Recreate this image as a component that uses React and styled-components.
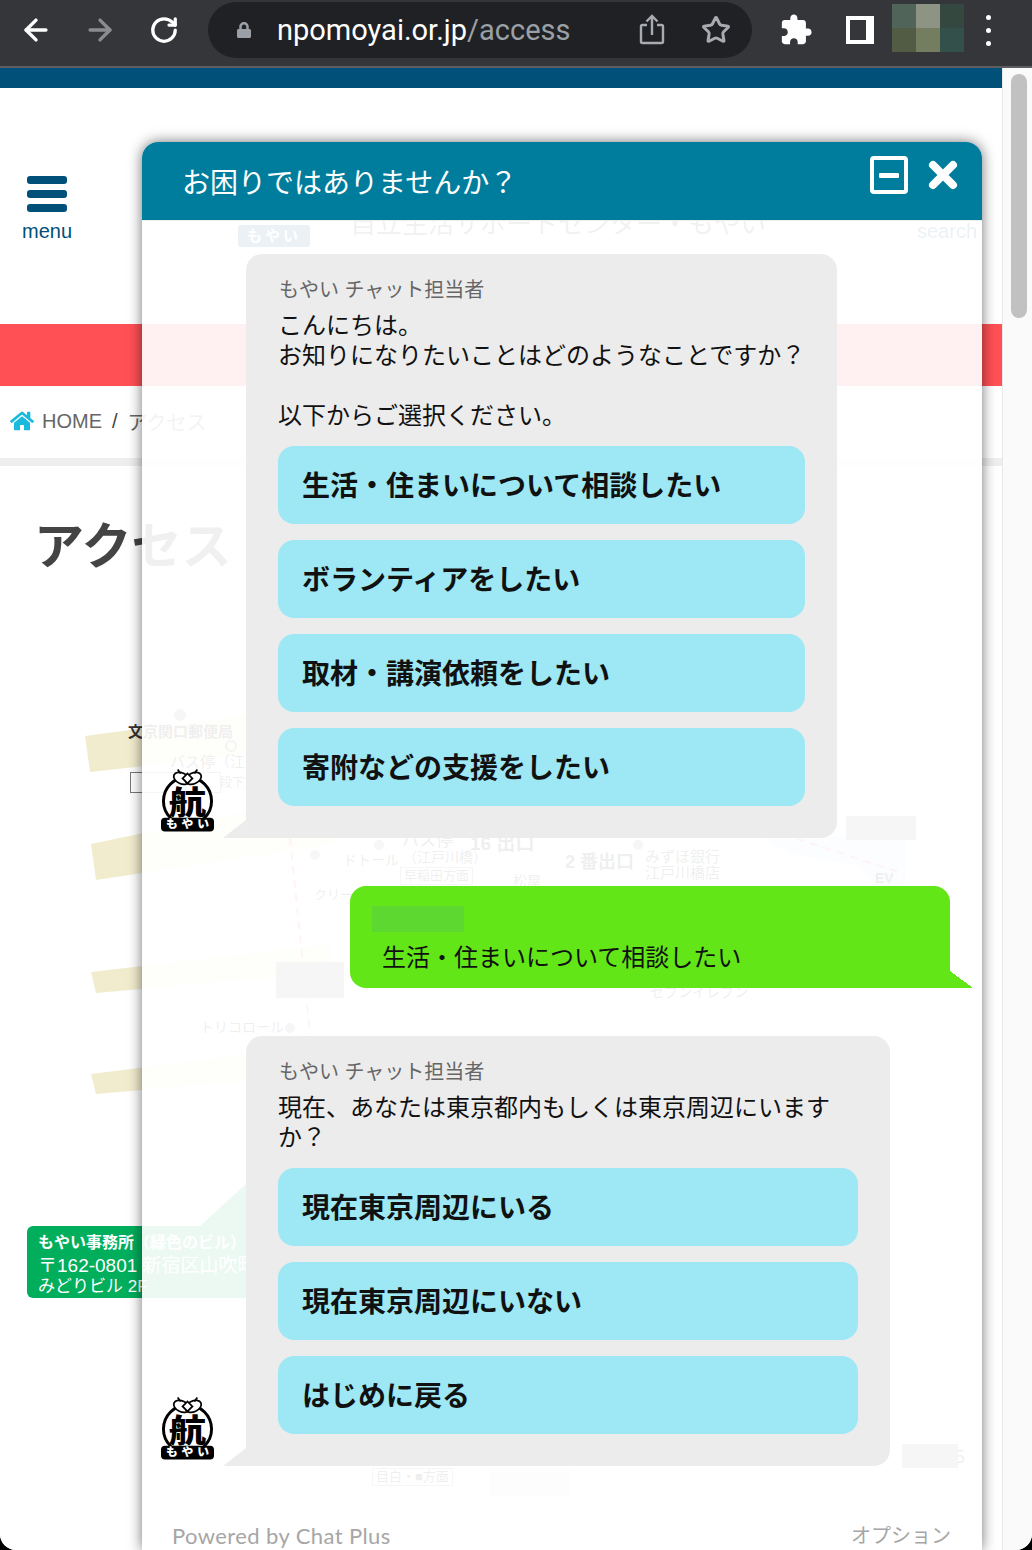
import React from 'react';
import styled, { createGlobalStyle } from 'styled-components';
import { ArrowLeft, ArrowRight, RotateCw, Star } from 'lucide-react';
import { FaHome, FaLock } from 'react-icons/fa';

const GlobalStyle = createGlobalStyle`
  html, body {
    margin: 0;
    padding: 0;
    background: #000;
  }
  body {
    width: 1032px;
    height: 1550px;
    overflow: hidden;
    font-family: 'Liberation Sans', 'Noto Sans CJK JP', sans-serif;
  }
  * { box-sizing: border-box; }
`;

const BrowserWindow = styled.div`
  width: 1032px;
  height: 1550px;
  display: flex;
  flex-direction: column;
  overflow: hidden;
  border-radius: 0 0 16px 16px;
  background: #fff;
`;

/* browser chrome */
const Toolbar = styled.div`
  height: 68px;
  flex: none;
  display: flex;
  align-items: flex-start;
  padding-left: 4px;
  background: #35363a;
  border-bottom: 2px solid #5d5e61;
`;

const ToolButton = styled.div`
  width: 64px;
  height: 60px;
  flex: none;
  display: flex;
  align-items: center;
  justify-content: center;
  color: ${({ $dim }) => ($dim ? '#8b8c8e' : '#fff')};
`;

const Omnibox = styled.div`
  width: 544px;
  height: 56px;
  margin: 2px 12px 0 12px;
  flex: none;
  display: flex;
  align-items: center;
  padding: 0 4px 0 28px;
  border-radius: 28px;
  background: #202124;
  color: #9aa0a6;
`;

const Url = styled.div`
  margin-left: 25px;
  flex: 1;
  font-family: Roboto, 'Liberation Sans', sans-serif;
  font-size: 29px;
  color: #9aa0a6;
  b {
    font-weight: 400;
    color: #fff;
  }
`;

const OmniIcon = styled.div`
  width: 64px;
  display: flex;
  justify-content: center;
  color: #a8abaf;
`;

const SidePanelIcon = styled.div`
  width: 28px;
  height: 28px;
  background: #35363a;
  border: solid #fff;
  border-width: 4px 8px 4px 4px;
`;

const ProfileBlur = styled.div`
  width: 72px;
  height: 48px;
  margin-top: 4px;
  flex: none;
  display: grid;
  grid-template-columns: repeat(3, 1fr);
  grid-template-rows: repeat(2, 1fr);
`;

const BlurCell = styled.div`
  background: ${({ $color }) => $color};
`;

const Dots = styled.div`
  width: 48px;
  height: 60px;
  display: flex;
  flex-direction: column;
  align-items: center;
  justify-content: center;
  gap: 8px;
  span {
    width: 5px;
    height: 5px;
    border-radius: 50%;
    background: #fff;
  }
`;

/* viewport */
const Viewport = styled.div`
  flex: 1;
  display: flex;
  min-height: 0;
`;

const Page = styled.div`
  position: relative;
  width: 1002px;
  flex: none;
  display: flex;
  flex-direction: column;
  background: #fff;
`;

const ScrollTrack = styled.div`
  flex: 1;
  padding: 6px 5px 0 8px;
  background: #fafafa;
  border-left: 1px solid #e8e8e8;
`;

const ScrollThumb = styled.div`
  height: 244px;
  border-radius: 9px;
  background: #c1c1c1;
`;

const TopBar = styled.div`
  height: 20px;
  flex: none;
  background: #00507a;
`;

const SiteHeader = styled.div`
  height: 236px;
  flex: none;
  display: flex;
  align-items: flex-start;
`;

const MenuButton = styled.div`
  width: 94px;
  padding-top: 88px;
  display: flex;
  flex-direction: column;
  align-items: center;
  color: #00507a;
  font-size: 20px;
  line-height: 24px;
`;

const BurgerBar = styled.div`
  width: 40px;
  height: 8px;
  margin-bottom: 6px;
  border-radius: 3px;
  background: #00507a;
  &:last-of-type {
    margin-bottom: 7px;
  }
`;

const SiteLogo = styled.div`
  width: 72px;
  height: 22px;
  margin: 137px 0 0 144px;
  border-radius: 3px;
  background: #00507a;
  color: #fff;
  font-size: 15px;
  font-weight: 700;
  line-height: 22px;
  text-align: center;
  letter-spacing: 3px;
`;

const SiteName = styled.div`
  margin: 118px 0 0 40px;
  width: 450px;
  font-size: 26px;
  line-height: 36px;
  color: #555;
  white-space: nowrap;
`;

const SearchLink = styled.div`
  margin: 131px 0 0 auto;
  padding-right: 25px;
  font-size: 20px;
  line-height: 24px;
  color: #00507a;
`;

const RedBand = styled.div`
  height: 62px;
  flex: none;
  background: #ff5055;
`;

const Breadcrumb = styled.div`
  height: 72px;
  flex: none;
  display: flex;
  align-items: center;
  padding: 0 0 2px 10px;
  font-size: 20px;
  color: #666;
  svg {
    color: #1ab9de;
    margin-right: 8px;
  }
  i {
    margin: 0 10px;
    font-style: normal;
    color: #444;
  }
`;

const Divider = styled.div`
  height: 8px;
  flex: none;
  background: #eee;
`;

const PageTitle = styled.h1`
  margin: 46px 0 22px 34px;
  font-size: 50px;
  line-height: 70px;
  font-weight: 700;
  color: #444;
`;

const AccessMap = styled.div`
  position: relative;
  flex: 1;
`;

const MapDrawing = styled.svg`
  position: absolute;
  left: 0;
  top: 0;
`;

const MapLabel = styled.div`
  position: absolute;
  left: ${({ $x }) => $x}px;
  top: ${({ $y }) => $y}px;
  font-size: ${({ $size }) => $size || 15}px;
  font-weight: ${({ $bold }) => ($bold ? 700 : 400)};
  line-height: 1.1;
  color: #333;
  white-space: nowrap;
  ${({ $boxed }) => $boxed && 'border: 1px solid #888; padding: 1px 3px;'}
`;

const OfficeSign = styled.div`
  position: absolute;
  left: 27px;
  top: 622px;
  width: 250px;
  height: 72px;
  padding: 6px 0 0 11px;
  border-radius: 6px;
  background: #00ae5c;
  color: #fff;
  white-space: nowrap;
  overflow: hidden;
`;

const SignLine = styled.div`
  font-size: ${({ $size }) => $size}px;
  font-weight: ${({ $bold }) => ($bold ? 700 : 400)};
  line-height: ${({ $height }) => $height}px;
`;

const BlurPatch = styled.div`
  position: absolute;
  left: ${({ $x }) => $x}px;
  top: ${({ $y }) => $y}px;
  width: ${({ $w }) => $w}px;
  height: ${({ $h }) => $h}px;
  background: #888;
`;

/* chat widget */
const ChatWidget = styled.div`
  position: absolute;
  left: 142px;
  top: 74px;
  bottom: 0;
  width: 840px;
  display: flex;
  flex-direction: column;
  border-radius: 16px 16px 0 0;
  background: rgba(255, 255, 255, 0.92);
  box-shadow: 0 0 14px rgba(0, 0, 0, 0.55);
`;

const ChatHeader = styled.div`
  height: 78px;
  flex: none;
  display: flex;
  align-items: center;
  padding: 0 23px 0 40px;
  border-radius: 16px 16px 0 0;
  background: #007d9c;
  color: #fff;
  font-size: 28px;
`;

const ChatTitle = styled.div`
  flex: 1;
`;

const MinimizeIcon = styled.div`
  width: 38px;
  height: 38px;
  margin: -12px 19px 0 0;
  display: flex;
  align-items: center;
  justify-content: center;
  border: 4px solid #fff;
  border-radius: 4px;
  &::after {
    content: '';
    width: 20px;
    height: 5px;
    border-radius: 1px;
    background: #fff;
  }
`;

const CloseIcon = styled.svg`
  width: 32px;
  height: 32px;
  margin-top: -12px;
`;

const ChatLog = styled.div`
  display: flex;
  flex-direction: column;
  gap: 48px;
  padding-top: 33px;
  border-top: 1px solid #eee;
`;

const ReceivedRow = styled.div`
  display: flex;
  align-items: flex-end;
  padding-left: 19px;
`;

const Bubble = styled.div`
  position: relative;
  width: ${({ $width }) => $width}px;
  margin-left: 32px;
  padding: 21px 32px 32px;
  border-radius: 16px 16px 16px 0;
  background: #ececec;
  color: #111;
  font-size: 24px;
  line-height: 30px;
  &::before {
    content: '';
    position: absolute;
    left: -23px;
    bottom: 0;
    border-style: solid;
    border-width: 0 0 18px 23px;
    border-color: transparent transparent #ececec transparent;
  }
`;

const Sender = styled.div`
  margin: 0 0 6px 1px;
  font-size: 20px;
  line-height: 30px;
  color: #666;
`;

const MessageText = styled.div`
  margin: 0 -8px 15px 0;
`;

const Choices = styled.div`
  display: flex;
  flex-direction: column;
  gap: 16px;
`;

const Choice = styled.div`
  height: 78px;
  display: flex;
  align-items: center;
  padding: 3px 0 0 24px;
  border-radius: 16px;
  background: #9de8f4;
  color: #111;
  font-size: 28px;
  font-weight: 700;
`;

const SentRow = styled.div`
  display: flex;
  justify-content: flex-end;
  padding-right: 32px;
`;

const SentBubble = styled.div`
  position: relative;
  width: 600px;
  padding: 20px 32px 15px 32px;
  border-radius: 16px 16px 0 16px;
  background: #62e617;
  color: #111;
  font-size: 24px;
  line-height: 30px;
  &::after {
    content: '';
    position: absolute;
    right: -23px;
    bottom: 0;
    width: 23px;
    height: 17px;
    background: linear-gradient(to top right, #62e617 50%, transparent 50%);
  }
`;

const NameBlur = styled.div`
  width: 92px;
  height: 26px;
  margin: 0 0 11px -10px;
  background: #5cd830;
`;

const ChatFooter = styled.div`
  margin-top: auto;
  height: 28px;
  flex: none;
  display: flex;
  justify-content: space-between;
  align-items: flex-start;
  padding: 0 31px 0 30px;
  color: #a6a6a6;
`;

const PoweredBy = styled.div`
  font-family: Lato, 'Liberation Sans', sans-serif;
  font-size: 22px;
  line-height: 28px;
  letter-spacing: 0.4px;
`;

const FooterOption = styled.div`
  font-size: 20px;
  line-height: 28px;
`;

const Avatar = () => (
  <svg width="53" height="64" viewBox="0 0 54 64" style={{ flex: 'none', marginBottom: 6 }}>
    <circle cx="27" cy="33" r="24.5" fill="#fff" stroke="#000" strokeWidth="3" />
    <g fill="#fff" stroke="#000" strokeWidth="1.8">
      <ellipse cx="21" cy="10" rx="8.5" ry="5.5" transform="rotate(25 21 10)" />
      <ellipse cx="33" cy="10" rx="8.5" ry="5.5" transform="rotate(-25 33 10)" />
      <path d="M27 5 32 10 27 15 22 10Z" />
      <path d="M17 1 20 5M37 1 34 5" fill="none" />
    </g>
    <text
      x="27"
      y="46"
      textAnchor="middle"
      textLength="38"
      lengthAdjust="spacingAndGlyphs"
      fontFamily="'Noto Sans CJK JP', sans-serif"
      fontWeight="900"
      fontSize="32"
      fill="#000"
    >
      航
    </text>
    <rect x="0" y="50" width="54" height="14" rx="4" fill="#000" />
    <text
      x="27"
      y="61"
      textAnchor="middle"
      textLength="44"
      fontFamily="'Noto Sans CJK JP', sans-serif"
      fontWeight="900"
      fontSize="12"
      fill="#fff"
    >
      もやい
    </text>
  </svg>
);

const firstChoices = [
  '生活・住まいについて相談したい',
  'ボランティアをしたい',
  '取材・講演依頼をしたい',
  '寄附などの支援をしたい',
];

const secondChoices = ['現在東京周辺にいる', '現在東京周辺にいない', 'はじめに戻る'];

const profileColors = ['#51645a', '#8d9484', '#34483f', '#525b43', '#747d5f', '#33504a'];

// map labels use page coordinates minus the map's top (604)
const mapLabels = [
  { x: 128, y: 120, text: '文京関口郵便局', bold: true },
  { x: 170, y: 150, text: 'バス停（江戸' },
  { x: 220, y: 173, text: '段下方面', size: 12 },
  { x: 402, y: 228, text: 'バス停', size: 17 },
  { x: 343, y: 249, text: 'ドトール', size: 14 },
  { x: 403, y: 246, text: '（江戸川橋）', size: 14 },
  { x: 400, y: 263, text: '早稲田方面', size: 13, boxed: true },
  { x: 470, y: 230, text: '16 出口', size: 19, bold: true },
  { x: 565, y: 249, text: '2 番出口', size: 18, bold: true },
  { x: 645, y: 245, text: 'みずほ銀行', size: 15 },
  { x: 645, y: 261, text: '江戸川橋店', size: 15 },
  { x: 513, y: 270, text: '松屋', size: 14 },
  { x: 875, y: 267, text: 'EV', size: 14, bold: true },
  { x: 314, y: 284, text: 'クリーニング', size: 13 },
  { x: 650, y: 381, text: 'セブンイレブン', size: 14 },
  { x: 200, y: 416, text: 'トリコロール', size: 14 },
  { x: 372, y: 864, text: '目白・■方面', size: 13, boxed: true },
  { x: 955, y: 844, text: '5', size: 18 },
];

const blurPatches = [
  { x: 846, y: 212, w: 70, h: 24 },
  { x: 276, y: 358, w: 68, h: 36 },
  { x: 902, y: 840, w: 56, h: 24 },
];

export default function App() {
  return (
    <>
      <GlobalStyle />
      <BrowserWindow>
        <Toolbar>
          <ToolButton><ArrowLeft size={34} strokeWidth={2.4} /></ToolButton>
          <ToolButton $dim><ArrowRight size={34} strokeWidth={2.4} /></ToolButton>
          <ToolButton><RotateCw size={30} strokeWidth={2.6} /></ToolButton>
          <Omnibox>
            <FaLock size={16} />
            <Url><b>npomoyai.or.jp</b>/access</Url>
            <OmniIcon>
              <svg width="26" height="32" viewBox="0 0 26 32" fill="none" stroke="currentColor" strokeWidth="2.4">
                <path d="M8 11H3.5a1.5 1.5 0 0 0-1.5 1.5v15a1.5 1.5 0 0 0 1.5 1.5h19a1.5 1.5 0 0 0 1.5-1.5v-15a1.5 1.5 0 0 0-1.5-1.5H18" />
                <path d="M13 21V2M7.5 7.5 13 2l5.5 5.5" />
              </svg>
            </OmniIcon>
            <OmniIcon><Star size={30} strokeWidth={2.4} /></OmniIcon>
          </Omnibox>
          <ToolButton>
            <svg width="34" height="34" viewBox="0 0 24 24" fill="currentColor">
              <path d="M20.5 11H19V7c0-1.1-.9-2-2-2h-4V3.5C13 2.12 11.88 1 10.5 1S8 2.12 8 3.5V5H4c-1.1 0-1.99.9-1.99 2v3.8H3.5c1.49 0 2.7 1.21 2.7 2.7s-1.21 2.7-2.7 2.7H2V20c0 1.1.9 2 2 2h3.8v-1.5c0-1.49 1.21-2.7 2.7-2.7 1.49 0 2.7 1.21 2.7 2.7V22H17c1.1 0 2-.9 2-2v-4h1.5c1.38 0 2.5-1.12 2.5-2.5S21.88 11 20.5 11z" />
            </svg>
          </ToolButton>
          <ToolButton><SidePanelIcon /></ToolButton>
          <ProfileBlur>
            {profileColors.map((color) => <BlurCell key={color} $color={color} />)}
          </ProfileBlur>
          <Dots><span /><span /><span /></Dots>
        </Toolbar>

        <Viewport>
          <Page>
            <TopBar />
            <SiteHeader>
              <MenuButton>
                <BurgerBar />
                <BurgerBar />
                <BurgerBar />
                menu
              </MenuButton>
              <SiteLogo>もやい</SiteLogo>
              <SiteName>自立生活サポートセンター・もやい</SiteName>
              <SearchLink>search</SearchLink>
            </SiteHeader>
            <RedBand />
            <Breadcrumb>
              <FaHome size={24} />
              HOME<i>/</i>アクセス
            </Breadcrumb>
            <Divider />
            <PageTitle>アクセス</PageTitle>
            <AccessMap>
              <MapDrawing width="1002" height="950">
                <g fill="#f2ecce">
                  <polygon points="85,132 250,110 255,150 90,168" />
                  <polygon points="91,240 330,190 335,240 96,276" />
                  <polygon points="91,368 330,340 335,368 96,389" />
                  <polygon points="91,470 330,440 335,470 96,490" />
                </g>
                <polygon points="760,232 905,232 905,290 880,290 860,262 790,250" fill="#cfe6fb" />
                <path d="M290 234 L310 430 M770 226 L905 270" stroke="#f0747a" strokeWidth="2" strokeDasharray="8 6" fill="none" />
                <polygon points="200,622 246,580 246,622" fill="#00ae5c" />
                <circle cx="180" cy="111" r="6" fill="#888" />
                <circle cx="231" cy="142" r="5" fill="none" stroke="#777" strokeWidth="2" />
                <circle cx="315" cy="251" r="5" fill="#999" />
                <circle cx="379" cy="241" r="5" fill="#999" />
                <circle cx="638" cy="241" r="5" fill="#888" />
                <circle cx="290" cy="424" r="5" fill="#888" />
                <rect x="130.5" y="168.5" width="90" height="20" fill="none" stroke="#777" />
                <rect x="490" y="866" width="80" height="26" fill="#ddd" />
              </MapDrawing>
              {mapLabels.map((label) => (
                <MapLabel
                  key={label.text}
                  $x={label.x}
                  $y={label.y}
                  $size={label.size}
                  $bold={label.bold}
                  $boxed={label.boxed}
                >
                  {label.text}
                </MapLabel>
              ))}
              {blurPatches.map((patch) => (
                <BlurPatch key={patch.x} $x={patch.x} $y={patch.y} $w={patch.w} $h={patch.h} />
              ))}
              <OfficeSign>
                <SignLine $size={16} $height={22} $bold>もやい事務所（緑色のビル）</SignLine>
                <SignLine $size={19} $height={24}>〒162-0801 新宿区山吹町</SignLine>
                <SignLine $size={17} $height={18}>みどりビル 2F</SignLine>
              </OfficeSign>
            </AccessMap>

            <ChatWidget>
              <ChatHeader>
                <ChatTitle>お困りではありませんか？</ChatTitle>
                <MinimizeIcon />
                <CloseIcon viewBox="0 0 32 32">
                  <path d="M6 6 26 26M26 6 6 26" stroke="#fff" strokeWidth="8" strokeLinecap="round" />
                </CloseIcon>
              </ChatHeader>
              <ChatLog>
                <ReceivedRow>
                  <Avatar />
                  <Bubble $width={591}>
                    <Sender>もやい チャット担当者</Sender>
                    <MessageText>
                      こんにちは。<br />
                      お知りになりたいことはどのようなことですか？<br />
                      <br />
                      以下からご選択ください。
                    </MessageText>
                    <Choices>
                      {firstChoices.map((choice) => <Choice key={choice}>{choice}</Choice>)}
                    </Choices>
                  </Bubble>
                </ReceivedRow>
                <SentRow>
                  <SentBubble>
                    <NameBlur />
                    生活・住まいについて相談したい
                  </SentBubble>
                </SentRow>
                <ReceivedRow>
                  <Avatar />
                  <Bubble $width={644}>
                    <Sender>もやい チャット担当者</Sender>
                    <MessageText>現在、あなたは東京都内もしくは東京周辺にいますか？</MessageText>
                    <Choices>
                      {secondChoices.map((choice) => <Choice key={choice}>{choice}</Choice>)}
                    </Choices>
                  </Bubble>
                </ReceivedRow>
              </ChatLog>
              <ChatFooter>
                <PoweredBy>Powered by Chat Plus</PoweredBy>
                <FooterOption>オプション</FooterOption>
              </ChatFooter>
            </ChatWidget>
          </Page>
          <ScrollTrack><ScrollThumb /></ScrollTrack>
        </Viewport>
      </BrowserWindow>
    </>
  );
}
